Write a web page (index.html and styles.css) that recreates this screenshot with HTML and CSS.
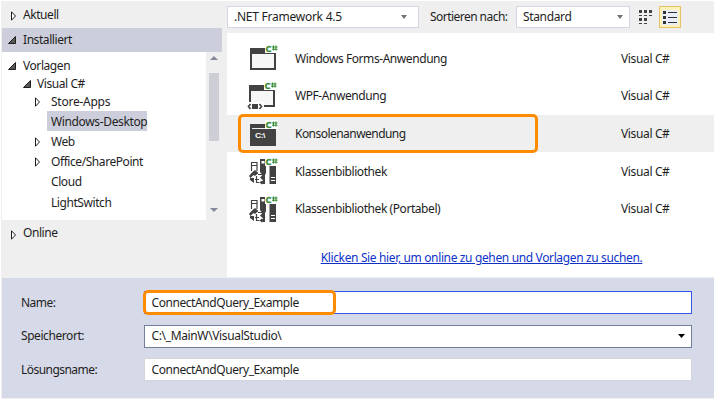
FILE: index.html
```html
<!DOCTYPE html>
<html lang="de">
<head>
<meta charset="utf-8">
<title>Neues Projekt</title>
<link rel="stylesheet" href="styles.css">
</head>
<body>
<svg class="defs" width="0" height="0">
  <defs>
    <g id="badge">
      <path d="M19 0h13v9H19z" class="halo"/>
      <text x="19.500" y="8" class="cs">C</text>
      <path d="M27.500 1.500v5M30 1.500v5M26 3h5.500M26 5.200h5.500" fill="none" stroke="#388a34" stroke-width="1.100"/>
    </g>
    <g id="books">
      <path d="M5.500 15V6.500h5.500V15M5 9.500h6" fill="none" stroke="#424242" stroke-width="1.200"/>
      <path d="M14 3h6v14l-1 2v9h-2v-8l-3-4z" fill="#424242"/>
      <path d="M15.500 5h3v2.500h-3z" fill="#fff"/>
      <path d="M23.500 9h6.500v19h-6.500z" fill="#424242"/>
      <path d="M25 21.500h4M25 24.500h4" stroke="#fff"/>
      <path d="M9 14l3.500 3-3.500 3-1.500-1-3 3-1.500-2 3-3.500zM4 22h4v5l-4-3z" fill="#424242"/>
      <path d="M12 18.500h5v2M9 23.500h4M10.500 20v6.500h3" fill="none" stroke="#424242" stroke-width="1.200"/>
      <path d="M16.500 19l2.500 2.500-2.500 2.500-2.500-2.500zM16 24.500l2.500 2-2.500 2-2.500-2z" fill="#424242"/>
    </g>
  </defs>
</svg>
<div class="dialog">
  <div class="top">
    <nav class="side">
      <div class="group recent"><svg class="arrow" width="7" height="10"><path d="M1.500 .8l4 4.200-4 4.200z"/></svg><span>Aktuell</span></div>
      <div class="group installed"><svg class="arrow open" width="8" height="8"><path d="M7.500 .5v7h-7z"/></svg><span>Installiert</span></div>
      <div class="treebox">
        <div class="tree">
          <div class="node n0"><svg class="arrow open" width="8" height="8"><path d="M7.500 .5v7h-7z"/></svg><span>Vorlagen</span></div>
          <div class="node n1"><svg class="arrow open" width="8" height="8"><path d="M7.500 .5v7h-7z"/></svg><span>Visual C#</span></div>
          <div class="node n2 first"><svg class="arrow" width="7" height="10"><path d="M1.500 .8l4 4.200-4 4.200z"/></svg><span class="l25">Store-Apps</span></div>
          <div class="node n2"><span class="picked l35">Windows-Desktop</span></div>
          <div class="node n2"><svg class="arrow" width="7" height="10"><path d="M1.500 .8l4 4.200-4 4.200z"/></svg><span>Web</span></div>
          <div class="node n2"><svg class="arrow" width="7" height="10"><path d="M1.500 .8l4 4.200-4 4.200z"/></svg><span>Office/SharePoint</span></div>
          <div class="node n2"><span>Cloud</span></div>
          <div class="node n2"><span>LightSwitch</span></div>
        </div>
        <div class="scroll">
          <svg width="8" height="4"><path d="M0 4l4-4 4 4z"/></svg>
          <div class="thumb"></div>
          <svg class="down" width="8" height="4"><path d="M0 0l4 4 4-4z"/></svg>
        </div>
      </div>
      <div class="group online"><svg class="arrow" width="7" height="10"><path d="M1.500 .8l4 4.200-4 4.200z"/></svg><span>Online</span></div>
    </nav>
    <main class="main">
      <div class="toolbar">
        <div class="select framework"><span class="l25">.NET Framework 4.5</span><svg width="6" height="4"><path d="M0 0h6l-3 4z"/></svg></div>
        <span class="sortlabel l50">Sortieren nach:</span>
        <div class="select sort"><span class="l35">Standard</span><svg width="6" height="4"><path d="M0 0h6l-3 4z"/></svg></div>
        <svg class="tiles" width="14" height="15" shape-rendering="crispEdges">
          <path d="M0 0h3v3H0zM5 0h3v3H5zM10 0h3v3h-3zM0 5h3v1H0zM5 5h3v1H5zM10 5h3v1h-3zM0 8h3v3H0zM5 8h3v3H5zM0 13h3v1H0zM5 13h3v1H5z"/>
        </svg>
        <div class="listbtn"><svg width="16" height="15" shape-rendering="crispEdges"><path d="M0 0h16v15H0z" fill="#e8eefa"/><path d="M1 1h3v3H1zM1 6h3v3H1zM1 11h3v3H1zM6 2h9v1H6zM6 7h9v1H6zM6 12h9v1H6z" fill="#333"/></svg></div>
      </div>
      <div class="list">
        <div class="row upper">
          <svg class="icon" width="34" height="31"><path d="M4 4h26v22H4z" fill="#424242"/><path d="M6 10h22v14H6z" fill="#f7f7f7"/><use href="#badge"/></svg>
          <span class="title">Windows Forms-Anwendung</span><span class="lang">Visual C#</span>
        </div>
        <div class="row upper">
          <svg class="icon" width="34" height="31"><path d="M3 4h26v22H3z" fill="#424242"/><path d="M5 10h22v14H5z" fill="#f7f7f7"/><path d="M0 21h18v8H0z" fill="#fff"/><path d="M6 23h6v5H6z" fill="#424242"/><path d="M4.500 23L2.500 25.500l2 2.500M13.500 23l2 2.500-2 2.500" fill="none" stroke="#424242" stroke-width="1.700"/><use href="#badge" x="-1"/></svg>
          <span class="title">WPF-Anwendung</span><span class="lang">Visual C#</span>
        </div>
        <div class="row chosen">
          <svg class="icon" width="34" height="31"><path d="M4 6h26v22H4z" fill="#424242"/><path d="M6 10.500h22" stroke="#efefef"/><text x="9" y="20" class="prompt" textLength="10" lengthAdjust="spacingAndGlyphs">C:\</text><use href="#badge" y="2"/></svg>
          <span class="title l50">Konsolenanwendung</span><span class="lang">Visual C#</span>
          <div class="mark rowmark"></div>
        </div>
        <div class="row fourth">
          <svg class="icon" width="34" height="31"><use href="#books"/><use href="#badge" y="1"/></svg>
          <span class="title">Klassenbibliothek</span><span class="lang">Visual C#</span>
        </div>
        <div class="row upper">
          <svg class="icon" width="34" height="31"><use href="#books"/><use href="#badge" y="1"/></svg>
          <span class="title">Klassenbibliothek (Portabel)</span><span class="lang">Visual C#</span>
        </div>
        <div class="more"><a class="l35" href="#">Klicken Sie hier, um online zu gehen und Vorlagen zu suchen.</a></div>
      </div>
    </main>
  </div>
  <div class="form">
    <span class="l50">Name:</span><div class="field name"><span>ConnectAndQuery_Example</span><div class="mark namemark"></div></div>
    <span>Speicherort:</span><div class="field place"><span class="l35">C:\_MainW\VisualStudio\</span><svg width="7" height="4"><path d="M0 0h7l-3.500 4z"/></svg></div>
    <span class="l50">Lösungsname:</span><div class="field"><span>ConnectAndQuery_Example</span></div>
  </div>
</div>
</body>
</html>
```
FILE: styles.css
```css
* { box-sizing: border-box; }
body { margin: 0; background: #fff; color: #1e1e1e; font: 12px/18px "Noto Sans", "Open Sans", sans-serif; letter-spacing: -0.43px; white-space: nowrap; }
.l25 { letter-spacing: -0.25px; }
.l35 { letter-spacing: -0.36px; }
.l50 { letter-spacing: -0.54px; }
.defs { display: block; }
.dialog { width: 713px; height: 398px; margin: 1px; padding: 0 0 1px 1px; background: #efefef; display: flex; flex-direction: column; }
.top { display: flex; height: 277px; }
.side { width: 225px; }
.group { display: flex; align-items: center; width: 220px; }
.recent { height: 27px; }
.recent .arrow, .online .arrow { margin: 3px 6px 0 8px; }
.installed { height: 24px; background: #cccedb; }
.installed .arrow { margin: 0 7px 0 6px; }
.online { height: 26px; }
.arrow { flex: none; fill: #fff; stroke: #1e1e1e; }
.arrow.open { fill: #595959; stroke: #1e1e1e; }
.treebox { display: flex; height: 168px; }
.tree { width: 204px; background: #fff; padding-top: 5px; }
.node { display: flex; align-items: center; height: 20.400px; }
.n0 { height: 18px; padding-left: 6px; }
.n0 .arrow { margin-right: 7px; }
.n1 { height: 18px; padding-left: 21px; }
.n1 .arrow { margin-right: 6px; }
.n2 { padding-left: 49px; }
.n2 .arrow { margin: 0 10px 0 -17px; }
.n2.first { height: 18px; }
.picked { background: #cccedb; height: 20px; line-height: 22px; padding-left: 4px; margin-left: -4px; }
.scroll { width: 16px; display: flex; flex-direction: column; align-items: center; padding: 4px 0 8px; fill: #868999; }
.thumb { width: 10px; height: 68px; margin-top: 13px; background: #cdced6; }
.down { margin-top: auto; }
.main { flex: 1; }
.toolbar { display: flex; align-items: center; height: 32px; }
.select { display: flex; align-items: center; justify-content: space-between; height: 22px; padding: 0 11px 0 6px; background: #fff; border: 1px solid #d5d6e3; }
.select svg { fill: #717171; }
.framework { width: 192px; }
.sortlabel { width: 86px; margin-left: 11px; }
.sort { width: 114px; padding-right: 6px; }
.tiles { margin-left: 9px; fill: #424242; }
.listbtn { width: 22px; height: 22px; margin-left: 6px; display: flex; align-items: center; justify-content: center; background: #fff2b8; border: 1px solid #e5c365; }
.list { height: 244px; padding-top: 8px; background: #fff; }
.row { position: relative; display: flex; align-items: center; height: 37px; padding-left: 19px; }
.row.fourth { height: 39px; }
.icon { flex: none; margin-right: 15px; }
.title { width: 326px; }
.title, .lang { padding-top: 1px; }
.upper .title, .upper .lang { padding: 0 0 2px; }
.lang { letter-spacing: -0.36px; }
.chosen { background: #efefef; }
.halo { fill: #fff; }
.chosen .halo { fill: #efefef; }
.cs { font: bold 9.500px "Open Sans", sans-serif; fill: #388a34; stroke: #388a34; stroke-width: .3px; }
.prompt { font: bold 8px "Liberation Sans", sans-serif; fill: #fff; }
.mark { position: absolute; border: 3px solid #ff8c00; border-radius: 5px; }
.rowmark { left: 11px; top: -1px; width: 300px; height: 39px; }
.more { text-align: center; margin-top: 20px; padding-left: 22px; line-height: 20px; }
.more a { color: #0e32c8; }
.form { height: 120px; background: #d6d9e7; display: grid; grid-template-columns: 123px 548px; grid-template-rows: 23px 23px 23px; row-gap: 10.500px; padding: 13px 0 0 19px; align-items: center; }
.field { position: relative; display: flex; align-items: center; justify-content: space-between; height: 23px; padding: 0 6px 0 6.500px; background: #fff; border: 1px solid #d4d5da; }
.field.name { border-color: #3457e8; }
.field.place { border-color: #717f99; }
.namemark { left: -2px; top: -2px; width: 193px; height: 25px; }
```
